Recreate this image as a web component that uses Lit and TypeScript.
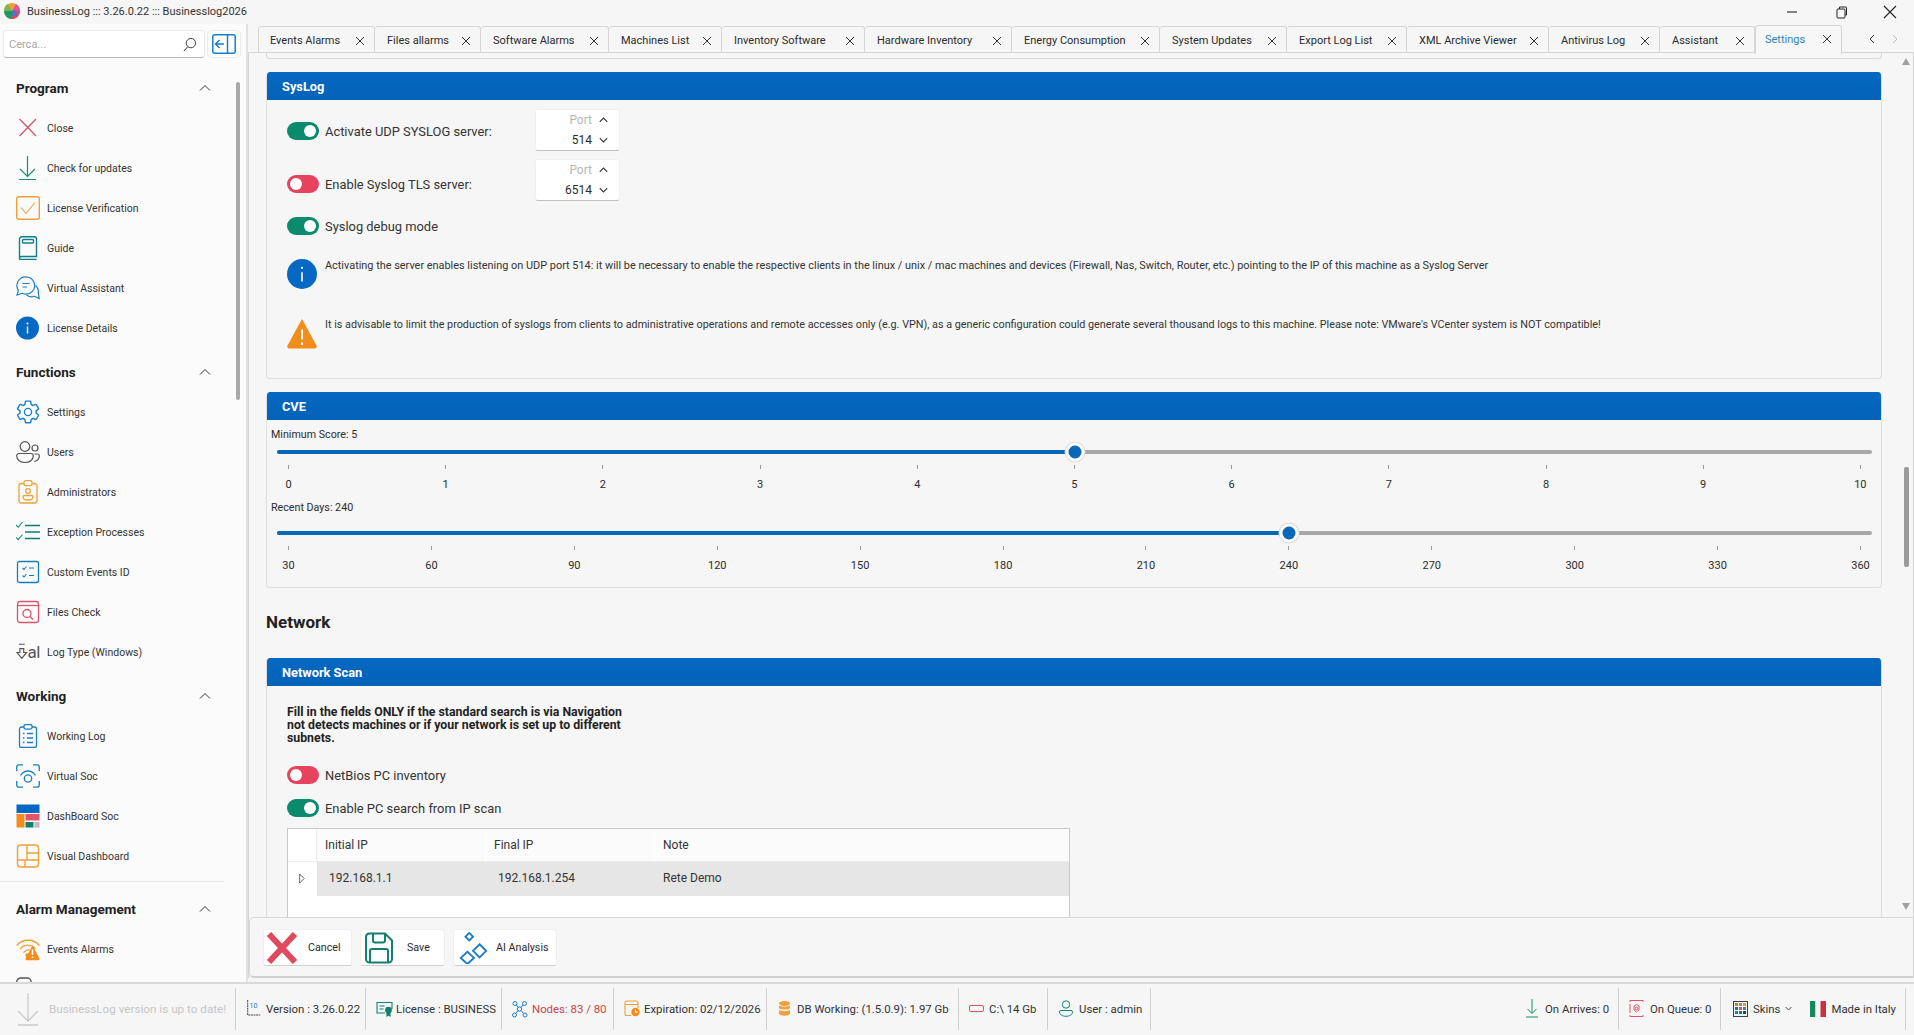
import { LitElement, html, css } from 'lit';
import { customElement } from 'lit/decorators.js';

const icons: Record<string, any> = {
  close: html`<svg viewBox="0 0 24 24" fill="none" stroke="#d8566c" stroke-width="1.3"><path d="M3.5 3 20 20M20 3 3.5 20"/></svg>`,
  update: html`<svg viewBox="0 0 24 24" fill="none" stroke="#1a8f6e" stroke-width="1.2"><path d="M11.5 0v20.5M4 13l7.5 7.5L19 13M3 23.5h17"/></svg>`,
  verify: html`<svg viewBox="0 0 24 24" fill="none" stroke="#f0a03a" stroke-width="1.4"><rect x=".7" y=".7" width="22.6" height="22.6" rx="2"/><path d="m5 11.5 5 6 9-11" stroke-width="1.1"/></svg>`,
  guide: html`<svg viewBox="0 0 24 24" fill="none" stroke="#127f86" stroke-width="1.4"><path d="M3.5 21V3a2.300 2.300 0 0 1 2.300-2.300h12.400A2.300 2.300 0 0 1 20.500 3v17.500H5.500a2 2 0 0 0-2 2 1 1 0 0 0 1 1h16"/><rect x="6.500" y="3.500" width="11" height="3.500" rx="1"/></svg>`,
  chat: html`<svg viewBox="0 0 24 24" fill="none" stroke="#1b7ec4" stroke-width="1.2"><path d="M10 .8a8.700 8.700 0 0 1 0 17.400c-1.400 0-2.700-.3-3.900-.9L1 19l1.400-4.700A8.700 8.700 0 0 1 10 .8Z"/><path d="M6.500 7.500h7M6.500 11h4.500"/><path d="M19.500 9.500c2.300 2 3.300 4.500 2.800 7.500l.9 5.500-5-2.200c-2.700 1-5.500.6-7.700-1.400"/></svg>`,
  info: html`<svg viewBox="0 0 24 24"><circle cx="11.500" cy="12" r="11.500" fill="#0569c4"/><path d="M11.500 10.500v7" stroke="#fff" stroke-width="1.4"/><circle cx="11.500" cy="7.500" r="1" fill="#fff"/></svg>`,
  gear: html`<svg viewBox="0 0 24 24" fill="none" stroke="#1b7ec4" stroke-width="1.3"><path d="M19.430 12.980c.04-.32.07-.64.07-.98 0-.34-.03-.66-.07-.98l2.110-1.650c.19-.15.24-.42.12-.64l-2-3.460c-.09-.16-.26-.25-.44-.25-.06 0-.12.01-.17.03l-2.490 1c-.52-.4-1.080-.73-1.690-.98l-.38-2.650C14.460 2.180 14.250 2 14 2h-4c-.25 0-.46.18-.49.42l-.38 2.650c-.61.25-1.170.59-1.690.98l-2.490-1c-.06-.02-.12-.03-.18-.03-.17 0-.34.09-.43.25l-2 3.460c-.13.22-.07.49.12.64l2.110 1.650c-.04.32-.07.65-.07.98 0 .33.03.66.07.98l-2.110 1.650c-.19.15-.24.42-.12.64l2 3.460c.09.16.26.25.44.25.06 0 .12-.01.17-.03l2.490-1c.52.4 1.080.73 1.690.98l.38 2.650c.03.24.24.42.49.42h4c.25 0 .46-.18.49-.42l.38-2.650c.61-.25 1.170-.59 1.690-.98l2.490 1c.06.02.12.03.18.03.17 0 .34-.09.43-.25l2-3.460c.12-.22.07-.49-.12-.64l-2.110-1.650z" transform="translate(-.9 -1) scale(1.080)"/><circle cx="12" cy="12" r="3.600"/></svg>`,
  users: html`<svg viewBox="0 0 24 24" fill="none" stroke="#555" stroke-width="1.2"><circle cx="9" cy="6.500" r="4.800"/><circle cx="19" cy="8" r="3"/><path d="M3 13.500h12a2.300 2.300 0 0 1 2.300 2.300c0 4.200-3.700 6.700-8.300 6.700S.7 20 .7 15.800A2.300 2.300 0 0 1 3 13.500Z"/><path d="M18.500 14h2.800a2 2 0 0 1 2 2c0 3-2.300 5-5 5.500"/></svg>`,
  admin: html`<svg viewBox="0 0 24 24" fill="none" stroke="#f0a03a" stroke-width="1.300"><path d="M8 3.500H5.500A2.500 2.500 0 0 0 3 6v14.500A2.500 2.500 0 0 0 5.500 23h13a2.500 2.500 0 0 0 2.500-2.500V6a2.500 2.500 0 0 0-2.500-2.500H16"/><rect x="8" y=".7" width="8" height="5" rx="1.800"/><circle cx="12" cy="11" r="2.300"/><path d="M8.500 15.500h7a1.500 1.500 0 0 1 1.500 1.500c0 1.800-2 3-5 3s-5-1.200-5-3a1.500 1.500 0 0 1 1.500-1.500Z"/></svg>`,
  except: html`<svg viewBox="0 0 24 24" fill="none" stroke="#1a8f6e" stroke-width="1.300"><path d="m0 5 2.200 2.200L6.500 2M0 17.500l2.200 2.200 4.300-5.200" stroke-width="1.100"/><path d="M9 5.500h15M9 12h15M9 18.500h15" stroke="#127f6e"/></svg>`,
  custom: html`<svg viewBox="0 0 24 24" fill="none" stroke="#137fb5" stroke-width="1.300"><rect x="1.500" y="1.500" width="21" height="21" rx="2"/><path d="m6.500 8 1.500 1.500 2.500-3M6.500 15.500 8 17l2.500-3M13 8h5M13 15.500h5" stroke-width="1.100"/></svg>`,
  files: html`<svg viewBox="0 0 24 24" fill="none" stroke="#d8566c" stroke-width="1.300"><rect x="1.500" y="1.500" width="21" height="21" rx="2.500"/><path d="M1.500 5.500h21"/><circle cx="11" cy="13.500" r="4"/><path d="m14 16.500 3 3"/></svg>`,
  logtype: html`<svg viewBox="0 0 12 24" fill="none" stroke="#555" stroke-width="1.200"><path d="M3 4h6M4 8.500h4v4h3L6 18.500 1 12.500h3z"/></svg>`,
  wlog: html`<svg viewBox="0 0 24 24" fill="none" stroke="#1b7ec4" stroke-width="1.300"><path d="M8 3H5.500A2 2 0 0 0 3.500 5v16.500a2 2 0 0 0 2 2h13a2 2 0 0 0 2-2V5a2 2 0 0 0-2-2H16"/><rect x="8" y=".6" width="8" height="4.500" rx="1.500"/><path d="M7 9.500h1.500M11 9.500h6M7 14h1.500M11 14h6M7 18.500h1.500M11 18.500h6"/></svg>`,
  vsoc: html`<svg viewBox="0 0 24 24" fill="none" stroke="#1b7ec4" stroke-width="1.300"><path d="M7 .8H3a2.300 2.300 0 0 0-2.300 2.300v4M17 .8h4a2.300 2.300 0 0 1 2.300 2.300v4M7 23.200H3A2.300 2.300 0 0 1 .7 21v-4M17 23.200h4a2.300 2.300 0 0 0 2.300-2.300v-4"/><path d="M4.500 11.500C6.500 8.500 9 7 12 7s5.500 1.500 7.500 4.500"/><circle cx="12" cy="14.500" r="3.700"/></svg>`,
  dash: html`<svg viewBox="0 0 24 24"><rect x=".5" y=".5" width="23" height="8.500" fill="#0569c4"/><rect x=".5" y="10" width="8" height="13.500" fill="#f28c1c"/><rect x="9.500" y="10" width="14" height="6.500" fill="#e2566d"/><rect x="9.500" y="18" width="8" height="5.500" fill="#12806e"/><rect x="18.500" y="18" width="5" height="5.500" fill="#bbb"/></svg>`,
  vdash: html`<svg viewBox="0 0 24 24" fill="none" stroke="#f0a03a" stroke-width="1.400"><rect x="1.500" y="1" width="21" height="22" rx="3"/><path d="M1.500 16h21M11 1v15M11 9h11.500M9 16v7"/></svg>`,
  alarm: html`<svg viewBox="0 0 24 24" fill="none" stroke="#f0a03a" stroke-width="1.300"><path d="M.7 8.500C6.500 1.500 17.500 1.500 23.300 8.500M4 12c4.500-5 11-5 15.500-.5M7.500 15.500c2-2 4-2.800 6-2.800"/><circle cx="11" cy="18" r="1.200" fill="#f0a03a"/><path d="m16.500 8.500 6.700 12.500a1.500 1.500 0 0 1-1.300 2.300H11a1.500 1.500 0 0 1-1.300-2.300Z" fill="#f28c1c" stroke="none"/><path d="M16.500 12.500v5.500M16.500 19.500v1.500" stroke="#fff" stroke-width="1.500"/></svg>`,
  blank: html`<svg viewBox="0 0 24 24" fill="none" stroke="#555" stroke-width="1.300"><rect x=".7" y="1" width="14.500" height="20" rx="4"/></svg>`,
};

type Item = { label: string; icon: string };
type Section = { title: string; items: Item[]; rule?: boolean };

const SECTIONS: Section[] = [
  {
    title: 'Program',
    items: [
      { label: 'Close', icon: 'close' },
      { label: 'Check for updates', icon: 'update' },
      { label: 'License Verification', icon: 'verify' },
      { label: 'Guide', icon: 'guide' },
      { label: 'Virtual Assistant', icon: 'chat' },
      { label: 'License Details', icon: 'info' },
    ],
  },
  {
    title: 'Functions',
    items: [
      { label: 'Settings', icon: 'gear' },
      { label: 'Users', icon: 'users' },
      { label: 'Administrators', icon: 'admin' },
      { label: 'Exception Processes', icon: 'except' },
      { label: 'Custom Events ID', icon: 'custom' },
      { label: 'Files Check', icon: 'files' },
      { label: 'Log Type (Windows)', icon: 'logtype' },
    ],
  },
  {
    title: 'Working',
    rule: true,
    items: [
      { label: 'Working Log', icon: 'wlog' },
      { label: 'Virtual Soc', icon: 'vsoc' },
      { label: 'DashBoard Soc', icon: 'dash' },
      { label: 'Visual Dashboard', icon: 'vdash' },
    ],
  },
  {
    title: 'Alarm Management',
    items: [
      { label: 'Events Alarms', icon: 'alarm' },
      { label: '', icon: 'blank' },
    ],
  },
];

const TABS: [string, number][] = [
  ['Events Alarms', 117], ['Files allarms', 106], ['Software Alarms', 128], ['Machines List', 113],
  ['Inventory Software', 143], ['Hardware Inventory', 147], ['Energy Consumption', 148], ['System Updates', 127],
  ['Export Log List', 120], ['XML Archive Viewer', 142], ['Antivirus Log', 111], ['Assistant', 95],
];

const chevUp = html`<svg class="chev" viewBox="0 0 12 8" fill="none" stroke="currentColor" stroke-width="1"><path d="m1 6.500 5-5 5 5"/></svg>`;
const chevDown = html`<svg class="chev" viewBox="0 0 12 8" fill="none" stroke="currentColor" stroke-width="1"><path d="m1 1.500 5 5 5-5"/></svg>`;
const tabX = html`<svg class="tabx" viewBox="0 0 10 10" fill="none" stroke="#333" stroke-width="1"><path d="m1 1 8 8M9 1 1 9"/></svg>`;

@customElement('app-root')
export class AppRoot extends LitElement {
  static styles = css`
    :host {
      display: block;
      font-family: Roboto, 'Liberation Sans', sans-serif;
      font-size: 11px;
      color: #2b2b2b;
    }
    .app {
      width: 1914px;
      height: 1035px;
      display: flex;
      flex-direction: column;
      background: #f6f6f6;
      overflow: hidden;
    }

    /* title bar */
    .title {
      height: 24px;
      flex: none;
      display: flex;
      align-items: center;
      padding-left: 4px;
      gap: 7px;
      font-size: 11px;
      color: #333;
    }
    .logo { width: 16px; height: 16px; margin-top: -2px; flex: none; }
    .title span { margin-top: -2px; }
    .winbtns { margin-left: auto; display: flex; margin-right: 16px; gap: 33px; }
    .winbtns svg { width: 16px; height: 16px; display: block; }

    .body { flex: 1; min-height: 0; display: flex; }

    /* sidebar */
    .side {
      width: 248px;
      flex: none;
      background: #fbfbfb;
      border-right: 2px solid #e2e2e2;
      box-sizing: border-box;
      display: flex;
      flex-direction: column;
      position: relative;
      overflow: hidden;
    }
    .searchrow { display: flex; gap: 2px; padding: 6px 0 0 3px; height: 34px; box-sizing: border-box; flex: none; }
    .search {
      width: 202px;
      height: 28px;
      box-sizing: border-box;
      background: #fff;
      border: 1px solid #ececec;
      border-bottom: 1px solid #b5b5b5;
      border-radius: 4px;
      display: flex;
      align-items: center;
      padding: 0 7px 0 5px;
      color: #a8a8a8;
      font-size: 11px;
    }
    .search svg { margin-left: auto; width: 15px; height: 15px; }
    .panelbtn {
      width: 34px;
      height: 28px;
      box-sizing: border-box;
      background: #fff;
      border: 1px solid #ececec;
      border-radius: 4px;
      display: flex;
      align-items: center;
      justify-content: center;
    }
    .panelbtn svg { width: 24px; height: 20px; }
    .nav { padding-top: 10px; }
    .sechead {
      height: 40px;
      display: flex;
      align-items: center;
      padding: 0 35px 0 16px;
      justify-content: space-between;
      font-weight: 700;
      font-size: 13.5px;
      color: #222;
    }
    .chev { width: 12px; height: 8px; color: #333; flex: none; }
    .section + .section { margin-top: 4px; }
    .rule { border-bottom: 1px solid #e6e6e6; margin: 5px 22px 7px 0; }
    .item { height: 40px; display: flex; align-items: center; gap: 7px; padding-left: 16px; color: #333; font-size: 10.5px; }
    .item .ic { width: 24px; height: 24px; flex: none; display: flex; align-items: center; }
    .item .ic svg { width: 24px; height: 24px; display: block; }
    .item .ic.lt { font-size: 17px; color: #555; letter-spacing: -.5px; }
    .item .ic.lt svg { width: 12px; height: 24px; }
    .sidebar-thumb { position: absolute; left: 236px; top: 58px; width: 4px; height: 318px; background: #a9a9a9; border-radius: 2px; }

    /* main */
    .main { flex: 1; min-width: 0; display: flex; flex-direction: column; }
    .tabs { height: 29px; flex: none; display: flex; align-items: flex-end; padding-left: 10px; }
    .tab {
      height: 27px;
      box-sizing: border-box;
      flex: none;
      background: #f6f6f6;
      border: 1px solid #d5d5d5;
      border-left: 0;
      border-radius: 3px 3px 0 0;
      display: flex;
      align-items: center;
      justify-content: space-between;
      padding: 2px 9px 0 12px;
      position: relative;
    }
    .tab:first-child { border-left: 1px solid #d5d5d5; padding-left: 11px; }
    .tabx { width: 10px; height: 10px; flex: none; }
    .tab.active {
      height: 29px;
      background: #f7f7f7;
      border: 1px solid #d5d5d5;
      border-bottom: 0;
      color: #2a83b8;
      padding: 0 9px 2px 9px;
      z-index: 1;
      margin-bottom: -1px;
    }
    .tabnav { display: flex; margin-left: 27px; gap: 17px; align-self: center; margin-bottom: -1px; }
    .tabnav svg { width: 6px; height: 10px; display: block; }
    .panel {
      flex: 1;
      min-height: 0;
      border-top: 1px solid #d5d5d5;
      border-left: 1px solid #d5d5d5;
      border-right: 1px solid #d5d5d5;
      margin-top: -1px;
      display: flex;
      flex-direction: column;
      position: relative;
      margin-bottom: 4px;
      background: #f6f6f6;
    }
    .scroll { flex: 1; min-height: 0; overflow: hidden; padding: 0 31px 0 17px; }
    .prevend { height: 5px; border: 1px solid #dadada; border-top: 0; border-radius: 0 0 4px 4px; margin-bottom: 13px; }
    .card { border: 1px solid #dedede; border-top: 0; border-radius: 4px; background: #f6f6f6; overflow: hidden; }
    .card + .card { margin-top: 13px; }
    .cardhead {
      height: 28px;
      background: linear-gradient(#0568c2, #0462b8);
      color: #fff;
      font-weight: 700;
      font-size: 12.8px;
      display: flex;
      align-items: center;
      padding-left: 16px;
      margin: 0 -1px;
    }

    /* syslog */
    .syslog { padding: 9px 20px 29px; }
    .srow { display: flex; align-items: center; height: 42px; margin-top: 8px; }
    .srow.first { margin-top: 0; }
    .srow.first .lab { padding-top: 2px; }
    .srow.second .lab { padding-top: 8px; }
    .srow.third { height: 34px; }
    .lab { width: 248px; flex: none; box-sizing: border-box; }
    .togglerow { display: flex; align-items: center; gap: 6px; font-size: 12.9px; color: #333; white-space: nowrap; }
    .toggle {
      width: 32px;
      height: 18px;
      border-radius: 9px;
      box-sizing: border-box;
      padding: 3px 3px;
      display: flex;
      flex: none;
    }
    .toggle i { width: 12px; height: 12px; border-radius: 50%; background: #fff; display: block; }
    .toggle.on { background: #0b8a6d; justify-content: flex-end; }
    .toggle.off { background: #e8435d; justify-content: flex-start; }
    .spin {
      width: 85px;
      height: 42px;
      box-sizing: border-box;
      background: #fff;
      border: 1px solid #f0f0f0;
      border-bottom: 1px solid #c0c0c0;
      border-radius: 3px;
      display: grid;
      grid-template-columns: 1fr 16px;
      grid-template-rows: 19px 21px;
      align-items: center;
      padding: 0 11px 0 0;
      justify-items: end;
      font-size: 12px;
    }
    .spin .port { color: #b5b5b5; }
    .spin .chev { width: 9px; height: 6px; display: block; stroke-width: 1.5; }
    .note { display: flex; gap: 8px; font-size: 10.9px; color: #333; line-height: 14px; margin-top: 16px; }
    .note.warn { margin-top: 29px; font-size: 10.8px; }
    .note svg { flex: none; width: 30px; height: 30px; display: block; }
    .note.warn svg { height: 31px; }

    /* sliders */
    .cve { padding: 8px 0 14px; }
    .slabel { padding-left: 4px; line-height: 14px; font-size: 10.7px; }
    .slabel.second { margin-top: 9px; }
    .slider { margin: 8px 9px 0 10px; }
    .slider.second { margin-top: 16px; }
    .track { height: 4px; background: #a8a8a8; border-radius: 2px; position: relative; }
    .fill { position: absolute; left: 0; top: 0; bottom: 0; background: #0569b8; border-radius: 2px; }
    .thumb {
      position: absolute;
      top: 50%;
      width: 19px;
      height: 19px;
      border-radius: 50%;
      background: #0569b8;
      border: 3.5px solid #fbfbfb;
      box-shadow: 0 0 0 1px #dcdcdc;
      box-sizing: border-box;
      transform: translate(-50%, -50%);
    }
    .ticks, .nums { display: flex; justify-content: space-between; padding: 0 11px 0 11px; }
    .ticks { margin-top: 11px; }
    .ticks i { width: 1px; height: 4px; background: #999; display: block; }
    .nums { margin-top: 9px; line-height: 14px; }
    .nums span { width: 1px; display: flex; justify-content: center; white-space: nowrap; }

    .section-title { font-size: 17px; font-weight: 700; line-height: 24px; margin: 22px 0 24px; color: #222; }

    /* network scan */
    .scan { padding: 20px 20px 40px; }
    .hint { font-weight: 700; line-height: 13px; color: #222; font-size: 12.3px; margin-bottom: 21px; white-space: nowrap; }
    .scan .togglerow + .togglerow { margin-top: 15px; }
    .table { width: 783px; margin-top: 11px; border: 1px solid #c9c9c9; background: #fff; box-sizing: border-box; height: 140px; }
    .thead, .trow { display: grid; grid-template-columns: 29px 169px 169px 1fr; }
    .thead { height: 33px; font-size: 12px; color: #333; }
    .thead div { background: #fbfbfb; padding-left: 8px; line-height: 32px; border-right: 1px solid #fff; border-bottom: 1px solid #ececec; }
    .thead div:first-child { background: #fff; border-right: 1px solid #ececec; }
    .trow { height: 34px; font-size: 12px; line-height: 33px; }
    .trow div { background: #e6e6e6; padding-left: 12px; color: #333; }
    .trow div:last-child { padding-left: 8px; }
    .trow div:first-child { background: #fff; padding: 11px 0 0 11px; line-height: 0; }
    .trow svg { width: 6px; height: 11px; }

    /* action bar */
    .actions {
      flex: none;
      height: 61px;
      box-sizing: border-box;
      background: #f6f6f6;
      border-top: 1px solid #d8d8d8;
      border-left: 1px solid #d8d8d8;
      border-bottom: 2px solid #d0d0d0;
      border-radius: 5px 0 0 5px;
      display: flex;
      align-items: flex-start;
      gap: 8px;
      padding: 11px 0 0 13px;
      position: relative;
      font-size: 10.7px;
    }
    .btn {
      height: 37px;
      box-sizing: border-box;
      background: #fff;
      border: 1px solid #efefef;
      border-bottom: 1px solid #cfcfcf;
      border-radius: 3px;
      display: flex;
      align-items: center;
      flex: none;
    }
    .btn span { line-height: 1; padding-top: 2px; }
    .cancel { width: 89px; padding-left: 2px; gap: 10px; }
    .cancel svg { width: 32px; height: 32px; }
    .save { width: 85px; padding-left: 4px; gap: 14px; }
    .save svg { width: 28px; height: 32px; }
    .ai { width: 104px; padding-left: 4px; gap: 8px; }
    .ai svg { width: 30px; height: 32px; }
    .vscroll { position: absolute; right: 3px; top: 0; bottom: 61px; width: 8px; pointer-events: none; }
    .vscroll .up { position: absolute; top: 5px; left: 0; width: 8px; height: 7px; }
    .vscroll .down { position: absolute; bottom: 7px; left: 0; width: 8px; height: 7px; }
    .vscroll .th { position: absolute; top: 414px; left: 2px; width: 5px; height: 100px; background: #9b9b9b; border-radius: 2px; }

    /* status bar */
    .status {
      height: 53px;
      flex: none;
      background: #f6f6f6;
      border-top: 2px solid #d9d9d9;
      box-sizing: border-box;
      display: flex;
      align-items: center;
      padding-bottom: 2px;
      font-size: 11.4px;
      color: #333;
    }
    .st {
      height: 42px;
      display: flex;
      align-items: center;
      gap: 4px;
      border-right: 1px solid #d0d0d0;
      box-sizing: border-box;
      padding-left: 10px;
      white-space: nowrap;
      flex: none;
    }
    .st svg { flex: none; display: block; }
    .st.first { width: 236px; padding-left: 16px; gap: 9px; color: #c6c6c6; font-size: 11.7px; }
    .st-version { width: 130px; padding-left: 11px; gap: 5px; }
    .st-license { width: 136px; gap: 3px; }
    .st-nodes { width: 112px; color: #c44; }
    .st-exp { width: 153px; }
    .st-db { width: 192px; padding-left: 12px; gap: 7px; }
    .st-disk { width: 89px; gap: 5px; }
    .st-user { width: 103px; gap: 6px; padding-left: 11px; }
    .st-arr { width: 100px; padding-left: 7px; gap: 7px; }
    .st-queue { width: 102px; gap: 6px; }
    .st-skins { width: 185px; padding-left: 12px; gap: 5px; margin-right: 8px; }
    .vtext { font-size: 7px; fill: #1b7ec4; stroke: none; }
    .skinchev { width: 7px; height: 5px; margin: 0 13px 0 0; }
    .spacer { flex: 1; }
  `;

  private slider(label: string, ticks: number[], value: number, second = false) {
    const frac = (value - ticks[0]) / (ticks[ticks.length - 1] - ticks[0]);
    const pos = `calc(11px + (100% - 22px) * ${frac})`;
    return html`
      <div class="slabel ${second ? 'second' : ''}">${label}</div>
      <div class="slider ${second ? 'second' : ''}">
        <div class="track">
          <div class="fill" style="width:${pos}"></div>
          <div class="thumb" style="left:${pos}"></div>
        </div>
        <div class="ticks">${ticks.map(() => html`<i></i>`)}</div>
        <div class="nums">${ticks.map((t) => html`<span>${t}</span>`)}</div>
      </div>
    `;
  }

  private toggle(on: boolean, label: string) {
    return html`<div class="togglerow"><div class="toggle ${on ? 'on' : 'off'}"><i></i></div><span>${label}</span></div>`;
  }

  private sidebar() {
    return html`
      <aside class="side">
        <div class="searchrow">
          <div class="search">Cerca...
            <svg viewBox="0 0 16 16" fill="none" stroke="#333" stroke-width="1"><circle cx="9.500" cy="6.500" r="5"/><path d="M6 10.500 2 15"/></svg>
          </div>
          <div class="panelbtn">
            <svg viewBox="0 0 24 20" fill="none" stroke="#1b7ec4" stroke-width="1.500"><rect x=".8" y=".8" width="22.400" height="18.400" rx="2"/><path d="M15.500 1v18M12 10H4M7.500 6 3.500 10l4 4"/></svg>
          </div>
        </div>
        <div class="nav">
          ${SECTIONS.map((s) => html`
            <div class="section">
              <div class="sechead"><span>${s.title}</span>${chevUp}</div>
              ${s.items.map((it) => html`
                <div class="item">
                  <div class="ic ${it.icon === 'logtype' ? 'lt' : ''}">${icons[it.icon]}${it.icon === 'logtype' ? html`<span>al</span>` : ''}</div>
                  <span>${it.label}</span>
                </div>
              `)}
              ${s.rule ? html`<div class="rule"></div>` : ''}
            </div>
          `)}
        </div>
        <div class="sidebar-thumb"></div>
      </aside>
    `;
  }

  private tabs() {
    return html`
      <div class="tabs">
        ${TABS.map(([t, w]) => html`<div class="tab" style="width:${w}px"><span>${t}</span>${tabX}</div>`)}
        <div class="tab active" style="width:87px"><span>Settings</span>${tabX}</div>
        <div class="tabnav">
          <svg viewBox="0 0 6 10" fill="none" stroke="#333"><path d="M5 1 1 5l4 4"/></svg>
          <svg viewBox="0 0 6 10" fill="none" stroke="#bbb"><path d="m1 1 4 4-4 4"/></svg>
        </div>
      </div>
    `;
  }

  private syslog() {
    const spin = (val: string) => html`
      <div class="spin">
        <span class="port">Port</span><span>${chevUp}</span>
        <span>${val}</span><span>${chevDown}</span>
      </div>`;
    return html`
      <div class="card">
        <div class="cardhead">SysLog</div>
        <div class="syslog">
          <div class="srow first">
            <div class="lab">${this.toggle(true, 'Activate UDP SYSLOG server:')}</div>
            ${spin('514')}
          </div>
          <div class="srow second">
            <div class="lab">${this.toggle(false, 'Enable Syslog TLS server:')}</div>
            ${spin('6514')}
          </div>
          <div class="srow third">${this.toggle(true, 'Syslog debug mode')}</div>
          <div class="note">
            <svg viewBox="0 0 24 24"><circle cx="12" cy="12" r="12" fill="#0569c4"/><path d="M12 10.500v7.500" stroke="#fff" stroke-width="1.300"/><circle cx="12" cy="7" r=".9" fill="#fff"/></svg>
            <span>Activating the server enables listening on UDP port 514: it will be necessary to enable the respective clients in the linux / unix / mac machines and devices (Firewall, Nas, Switch, Router, etc.) pointing to the IP of this machine as a Syslog Server</span>
          </div>
          <div class="note warn">
            <svg viewBox="0 0 30 30"><path d="M15 .5 29.500 27a2 2 0 0 1-1.800 3H2.300a2 2 0 0 1-1.800-3Z" fill="#f28c1c"/><path d="M15 11v10M15 24v2.500" stroke="#fff" stroke-width="2"/></svg>
            <span>It is advisable to limit the production of syslogs from clients to administrative operations and remote accesses only (e.g. VPN), as a generic configuration could generate several thousand logs to this machine. Please note: VMware's VCenter system is NOT compatible!</span>
          </div>
        </div>
      </div>
    `;
  }

  private scan() {
    return html`
      <div class="card">
        <div class="cardhead">Network Scan</div>
        <div class="scan">
          <div class="hint">Fill in the fields ONLY if the standard search is via Navigation<br>not detects machines or if your network is set up to different<br>subnets.</div>
          ${this.toggle(false, 'NetBios PC inventory')}
          ${this.toggle(true, 'Enable PC search from IP scan')}
          <div class="table">
            <div class="thead"><div></div><div>Initial IP</div><div>Final IP</div><div>Note</div></div>
            <div class="trow">
              <div><svg viewBox="0 0 6 11" fill="none" stroke="#666"><path d="m.7 1 4.500 4.500L.7 10z"/></svg></div>
              <div>192.168.1.1</div><div>192.168.1.254</div><div>Rete Demo</div>
            </div>
          </div>
        </div>
      </div>
    `;
  }

  private actions() {
    return html`
      <div class="actions">
        <div class="btn cancel">
          <svg viewBox="0 0 32 32" fill="none" stroke="#e0495e" stroke-width="6"><path d="m3 2 26 28M29 2 3 30"/></svg>
          <span>Cancel</span>
        </div>
        <div class="btn save">
          <svg viewBox="0 0 28 32" fill="none" stroke="#12806e" stroke-width="2"><path d="M4 1.500h16l7 7V27a3.500 3.500 0 0 1-3.500 3.500h-19A3.500 3.500 0 0 1 1 27V5a3.500 3.500 0 0 1 3-3.500Z"/><path d="M8 2v6.500a2 2 0 0 0 2 2h8a2 2 0 0 0 2-2V2M5 30V19a2 2 0 0 1 2-2h14a2 2 0 0 1 2 2v11"/></svg>
          <span>Save</span>
        </div>
        <div class="btn ai">
          <svg viewBox="0 0 30 34" fill="none" stroke="#1b7ec4" stroke-width="2"><path d="m11 1 4 4-4 4-4-4zM22 13l7 7-7 7-7-7zM9 21l7 6.500-7 6.500-7-6.500z"/></svg>
          <span>AI Analysis</span>
        </div>
      </div>
    `;
  }

  private statusbar() {
    return html`
      <footer class="status">
        <div class="st first">
          <svg width="24" height="36" viewBox="0 0 24 36" fill="none" stroke="#c9c9c9" stroke-width="1.300"><path d="M12 2v28M2 20l10 10 10-10M2 34h20"/></svg>
          BusinessLog version is up to date!
        </div>
        <div class="st st-version">
          <svg width="14" height="17" viewBox="0 0 14 17" fill="none" stroke="#444"><path d="M.7 0v15h12.500" stroke-dasharray="2 .6"/><text class="vtext" x="2.500" y="8">10</text></svg>
          <span>Version : 3.26.0.22</span>
        </div>
        <div class="st st-license">
          <svg width="17" height="17" viewBox="0 0 17 17" fill="none" stroke="#127f6e" stroke-width="1.100"><path d="M16 9V2.500H1V13h8"/><path d="M3.500 6h5M3.500 9h4" /><circle cx="12.500" cy="10" r="2.800" fill="#127f6e"/><path d="M11 12v4l1.500-1 1.500 1v-4" fill="#127f6e"/></svg>
          <span>License : BUSINESS</span>
        </div>
        <div class="st st-nodes">
          <svg width="16" height="18" viewBox="0 0 16 18" fill="none" stroke="#1b7ec4"><circle cx="3" cy="3.500" r="2"/><circle cx="12.500" cy="3.500" r="2"/><circle cx="7.500" cy="9" r="2.200"/><circle cx="2.500" cy="15" r="2"/><circle cx="13" cy="15" r="2"/><path d="m4.300 5 2 2.300M11 5 9 7.300M6 10.700 3.700 13.500M9.200 10.700 11.600 13.500"/></svg>
          <span>Nodes: 83 / 80</span>
        </div>
        <div class="st st-exp">
          <svg width="16" height="17" viewBox="0 0 16 17" fill="none" stroke="#f0a03a" stroke-width="1.100"><path d="M7 15.500H3A2 2 0 0 1 1 13.500V3A2 2 0 0 1 3 1h9a2 2 0 0 1 2 2v5M1 4.500h13"/><circle cx="11.500" cy="12" r="4.200" fill="#f28c1c" stroke="none"/><path d="M11.500 9.500V12h2.200" stroke="#fff"/></svg>
          <span>Expiration: 02/12/2026</span>
        </div>
        <div class="st st-db">
          <svg width="11" height="15" viewBox="0 0 11 15" fill="#f0a03a"><ellipse cx="5.500" cy="2.500" rx="5.500" ry="2.500"/><path d="M0 4.500c1.500 1.500 9.500 1.500 11 0V7c-1 2-10 2-11 0ZM0 9c1.500 1.500 9.500 1.500 11 0v3.500C10 15.500 1 15.500 0 12.500Z"/></svg>
          <span>DB Working: (1.5.0.9): 1.97 Gb</span>
        </div>
        <div class="st st-disk">
          <svg width="15" height="7" viewBox="0 0 15 7" fill="none" stroke="#d8566c"><rect x=".5" y=".5" width="14" height="6" rx="1.500"/></svg>
          <span>C:\\ 14 Gb</span>
        </div>
        <div class="st st-user">
          <svg width="14" height="17" viewBox="0 0 14 17" fill="none" stroke="#127f86"><circle cx="7" cy="4.500" r="3.700"/><path d="M2 10.500h10a1.500 1.500 0 0 1 1.500 1.500c0 2.500-3 4.300-6.500 4.300S.5 14.500.5 12A1.500 1.500 0 0 1 2 10.500Z"/></svg>
          <span>User : admin</span>
        </div>
        <div class="spacer"></div>
        <div class="st st-arr">
          <svg width="12" height="19" viewBox="0 0 12 19" fill="none" stroke="#1a8f6e"><path d="M6 0v14M1.500 10 6 14.500 10.500 10M0 18h12"/></svg>
          <span>On Arrives: 0</span>
        </div>
        <div class="st st-queue">
          <svg width="15" height="19" viewBox="0 0 15 19" fill="none" stroke="#d8566c"><path d="M1 3V1.500h13V3M1 16v1.500h13V16M1 5v9"/><path d="M7.500 5.500 10 7v4l-2.500 2L5 11V7z"/><circle cx="7.500" cy="9.500" r="1.300"/></svg>
          <span>On Queue: 0</span>
        </div>
        <div class="st st-skins">
          <svg width="15" height="18" viewBox="0 0 15 18"><rect x=".5" y="1.500" width="14" height="15" fill="none" stroke="#345"/><rect x="2" y="3" width="3" height="3" fill="#d8763c"/><rect x="6" y="3" width="3" height="3" fill="#b88a3a"/><rect x="10" y="3" width="3" height="3" fill="#e0a020"/><rect x="2" y="7" width="3" height="3" fill="#127f86"/><rect x="6" y="7" width="3" height="3" fill="#e2566d"/><rect x="10" y="7" width="3" height="3" fill="#3a8ac4"/><rect x="2" y="11" width="3" height="3" fill="#1b7ec4"/><rect x="6" y="11" width="3" height="3" fill="#127f6e"/><rect x="10" y="11" width="3" height="3" fill="#245"/></svg>
          <span>Skins</span>
          <svg class="skinchev" viewBox="0 0 12 8" fill="none" stroke="#333" stroke-width="1.500"><path d="m1 1.500 5 5 5-5"/></svg>
          <svg width="16" height="16" viewBox="0 0 16 16"><rect width="5.500" height="16" fill="#108a5e"/><rect x="5.500" width="5" height="16" fill="#f6f6f6"/><rect x="10.500" width="5.500" height="16" fill="#c8303f"/></svg>
          <span>Made in Italy</span>
        </div>
      </footer>
    `;
  }

  render() {
    return html`
      <div class="app">
        <header class="title">
          <svg class="logo" viewBox="0 0 16 16">
            <circle cx="8" cy="8" r="8" fill="#f0a03a"/>
            <path d="M8 8 16 8A8 8 0 0 1 8 16Z" fill="#d8476a"/>
            <path d="M8 8 8 16A8 8 0 0 1 0 8Z" fill="#1a9a6e"/>
            <path d="M8 8 0 8A8 8 0 0 1 4 1.100Z" fill="#7ab648"/>
            <path d="M8 8 16 8A8 8 0 0 0 12 1.100Z" fill="#e0559a"/>
            <circle cx="10" cy="10" r="3" fill="#3a7ad0" opacity=".8"/>
          </svg>
          <span>BusinessLog ::: 3.26.0.22 ::: Businesslog2026</span>
          <div class="winbtns">
            <svg viewBox="0 0 16 16" fill="none" stroke="#222" stroke-width="1.100"><path d="M3 8h10"/></svg>
            <svg viewBox="0 0 16 16" fill="none" stroke="#222"><rect x="4" y="5" width="8" height="9" rx="1"/><path d="M6.500 5V3h6a1 1 0 0 1 1 1v7h-1.500"/></svg>
            <svg viewBox="0 0 16 16" fill="none" stroke="#222" stroke-width="1.100"><path d="m2 2 12 12M14 2 2 14"/></svg>
          </div>
        </header>
        <div class="body">
          ${this.sidebar()}
          <div class="main">
            ${this.tabs()}
            <div class="panel">
              <div class="scroll">
                <div class="prevend"></div>
                ${this.syslog()}
                <div class="card">
                  <div class="cardhead">CVE</div>
                  <div class="cve">
                    ${this.slider('Minimum Score: 5', [0, 1, 2, 3, 4, 5, 6, 7, 8, 9, 10], 5)}
                    ${this.slider('Recent Days: 240', [30, 60, 90, 120, 150, 180, 210, 240, 270, 300, 330, 360], 240, true)}
                  </div>
                </div>
                <div class="section-title">Network</div>
                ${this.scan()}
              </div>
              ${this.actions()}
              <div class="vscroll">
                <svg class="up" viewBox="0 0 8 7"><path d="M4 0 8 7H0Z" fill="#a0a0a0"/></svg>
                <div class="th"></div>
                <svg class="down" viewBox="0 0 8 7"><path d="M4 7 8 0H0Z" fill="#a0a0a0"/></svg>
              </div>
            </div>
          </div>
        </div>
        ${this.statusbar()}
      </div>
    `;
  }
}

declare global {
  interface HTMLElementTagNameMap {
    'app-root': AppRoot;
  }
}
